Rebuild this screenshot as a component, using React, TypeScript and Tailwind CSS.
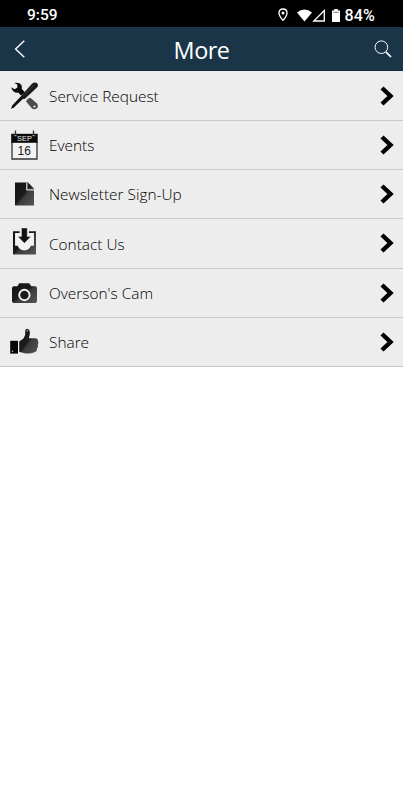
import React from "react";

const Gloss = ({ id }: { id: string }) => (
  <defs>
    <linearGradient id={id} x1="0" y1="0" x2="1" y2="1">
      <stop offset="0" stopColor="#111" />
      <stop offset="0.48" stopColor="#1c1c1c" />
      <stop offset="0.56" stopColor="#3c3c3c" />
      <stop offset="1" stopColor="#555" />
    </linearGradient>
  </defs>
);

const ToolsIcon = () => (
  <svg viewBox="0 0 32 32" className="size-8">
    <path d="M3.2 7.2 L6.6 9.2 L9.4 7.6 L9.3 4.6 L6.2 3 Q12 1.8 13.8 6 L13.8 9 L17 12.2 L13 15.6 L10.4 12.8 Q5 13.4 3.2 7.2Z" fill="#0b0b0b" />
    <path d="M19.5 19.3 L22 17.4 L29 23.6 Q31 26.5 28.6 28.6 Q26 30.3 23.8 28.2 L18 21.6Z" fill="#4d4d4d" />
    <circle cx="26.5" cy="26.5" r="1.1" fill="#ededed" />
    <path d="M3 29 L4.2 25.4 L13.4 15.8 L15.8 18 L6.2 27.3Z" fill="#111" />
    <path d="M13.5 15.5 L24 3.7 Q27 1.6 29.3 3.4 Q31 5.6 28.4 8 L17 18.8 Q13.2 20.2 13.5 15.5Z" fill="#1b1b1b" />
    <path d="M17 14.5 L25.5 5.5" stroke="#444" strokeWidth="0.8" />
  </svg>
);

const CalendarIcon = () => (
  <svg viewBox="0 0 32 32" className="size-8">
    <path d="M4 13 V30 H29 V13" fill="#f2f2f2" stroke="#333" strokeWidth="1.3" />
    <path d="M3.2 4.8 H29.7 V13.8 H3.2Z" fill="#0a0a0a" />
    <path d="M7.5 1.4 V7 M25.5 1.4 V7" stroke="#333" strokeWidth="1.3" />
    <path d="M5.7 6.7 H8.8 M24.2 6.7 H27.3" stroke="#aaa" strokeWidth="0.8" />
    <text x="16.5" y="12.2" textAnchor="middle" fill="#eee" fontSize="7.4" fontFamily="Liberation Sans, sans-serif">SEP</text>
    <text x="16.2" y="26" textAnchor="middle" fill="#222" fontSize="12" fontFamily="Liberation Sans, sans-serif">16</text>
  </svg>
);

const DocumentIcon = () => (
  <svg viewBox="0 0 32 32" className="size-8">
    <Gloss id="doc" />
    <path d="M7 4.4 H20 L26 10.6 V27.6 H7Z" fill="url(#doc)" />
    <path d="M18.8 5 V11.8 H26" fill="none" stroke="#d8d8d8" strokeWidth="1.3" />
  </svg>
);

const InboxIcon = () => (
  <svg viewBox="0 0 32 32" className="size-8">
    <Gloss id="inbox" />
    <path d="M5 4.3 H11.6 V6 H7.2 V18.6 H9.7 Q11.6 23.3 16.3 23.3 Q21 23.3 22.8 18.6 H25.8 V6 H21 V4.3 H28 V27.4 H5Z" fill="url(#inbox)" />
    <path d="M7.2 6 H25.8 V18.6 H22.8 Q21 23.3 16.3 23.3 Q11.6 23.3 9.7 18.6 H7.2Z" fill="#f3f3f3" />
    <path d="M13.5 1.1 H19.2 V9.6 H22.9 L16.4 16.2 L9.9 9.6 H13.5Z" fill="#111" stroke="#ededed" strokeWidth="0.4" />
  </svg>
);

const CameraIcon = () => (
  <svg viewBox="0 0 32 32" className="size-8">
    <Gloss id="camera" />
    <path d="M4 11.2 Q4 9.2 6 9.2 H9.3 L11.4 6.3 H21.2 L23.3 9.2 H27 Q29 9.2 29 11.2 V24 Q29 26 27 26 H6 Q4 26 4 24Z" fill="url(#camera)" />
    <circle cx="16.4" cy="18" r="5.2" fill="#1c1c1c" stroke="#f2f2f2" strokeWidth="1.9" />
  </svg>
);

const ThumbIcon = () => (
  <svg viewBox="0 0 32 32" className="size-8">
    <Gloss id="thumb" />
    <path d="M2.2 14.8 H10 V27.6 H2.2Z" fill="#080808" />
    <circle cx="4.5" cy="25.3" r="0.8" fill="#bbb" />
    <path d="M11.2 15.6 L15.5 12.4 Q18 9 17.2 5.2 Q17 2.7 19 2.7 Q22.3 2.8 21.8 8.2 L20.8 12.3 H28 Q30.4 12.8 30 15 Q31 17 29.8 18.8 Q30.5 21 29 22.4 Q29.4 25 27 26 Q22 28.4 15.5 27 L11.2 25.8Z" fill="url(#thumb)" />
    <circle cx="19.3" cy="4.7" r="0.9" fill="#999" />
  </svg>
);

const items = [
  { label: "Service Request", Icon: ToolsIcon },
  { label: "Events", Icon: CalendarIcon },
  { label: "Newsletter Sign-Up", Icon: DocumentIcon },
  { label: "Contact Us", Icon: InboxIcon },
  { label: "Overson's Cam", Icon: CameraIcon },
  { label: "Share", Icon: ThumbIcon },
];

export default function App() {
  return (
    <div className="min-h-screen bg-white font-['Open_Sans',sans-serif]">
      {/* Status bar */}
      <div className="flex h-[27px] items-center justify-between bg-black pr-7 pl-[27px] font-[Roboto,sans-serif] text-white">
        <span className="pt-[5px] text-[15.5px] leading-none font-medium">9:59</span>
        <div className="flex items-center pt-[3px]">
          <svg viewBox="0 0 10 14" className="mr-[9px] h-[14px] w-[10px]" fill="none" stroke="#fff" strokeWidth="1.3">
            <path d="M5 1 Q9 1 9 5 Q9 8 5 12.4 Q1 8 1 5 Q1 1 5 1Z" />
            <circle cx="5" cy="5" r="1.5" fill="#fff" stroke="none" />
          </svg>
          <svg viewBox="0 0 15 13" className="h-[13px] w-[15px]" fill="#fff">
            <path d="M0 3.4 Q7.5 -2.2 15 3.4 L7.5 12.4Z" />
          </svg>
          <svg viewBox="0 0 14 13" className="mr-[6px] h-[13px] w-[14px]" fill="none" stroke="#fff" strokeWidth="1.3">
            <path d="M12.3 1.5 V12 H1.8Z" />
          </svg>
          <svg viewBox="0 0 8 13" className="mr-1 h-[13px] w-2" fill="#fff">
            <path d="M2.2 0 H5.8 V1.4 H8 V13 H0 V1.4 H2.2Z" />
            <path d="M1.4 3.3 H6.6" stroke="#777" strokeWidth="1" />
          </svg>
          <span className="pt-[2px] text-[16px] leading-none font-medium tracking-[0.2px]">84%</span>
        </div>
      </div>

      {/* Title bar */}
      <header className="flex h-[44.4px] items-center justify-between border-b border-[#142b3e] bg-[#1a3548] pr-[11px] pl-[14px] text-white">
        <svg viewBox="0 0 12 18" className="h-[18px] w-3" fill="none" stroke="#fff" strokeWidth="1.4">
          <path d="M10.3 0.8 L1.6 9 L10.3 17.2" />
        </svg>
        <h1 className="ml-[3px] pt-[5px] text-[23.4px] leading-none tracking-[-0.5px]">More</h1>
        <svg viewBox="0 0 18 18" className="size-[18px]" fill="none" stroke="#fff">
          <circle cx="7.4" cy="7.2" r="6.3" strokeWidth="1" />
          <path d="M11.9 11.8 L17 17" strokeWidth="1.7" />
        </svg>
      </header>

      {/* Menu */}
      <ul>
        {items.map(({ label, Icon }) => (
          <li key={label} className="flex h-[49.3px] items-center border-b border-[#c8c8c8] bg-[#ededed] pr-[9px] pl-2">
            <Icon />
            <span className="ml-[9px] flex-1 pt-[2.4px] text-[15.4px] leading-5 font-light text-black">{label}</span>
            <svg viewBox="0 0 14 20" className="h-5 w-[14px]" fill="none" stroke="#000" strokeWidth="4.4">
              <path d="M2 2 L10.5 10 L2 18" />
            </svg>
          </li>
        ))}
      </ul>
    </div>
  );
}
